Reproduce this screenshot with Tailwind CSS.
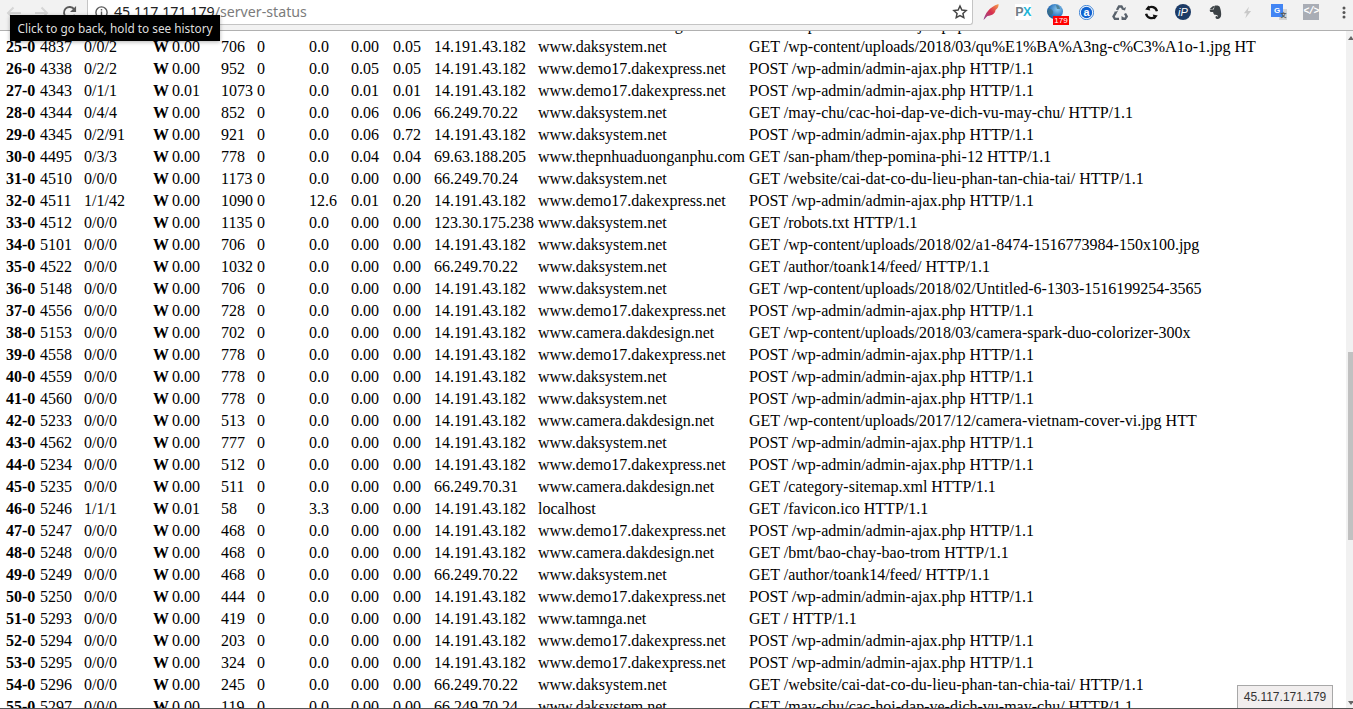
<!DOCTYPE html>
<html lang="en">
<head>
<meta charset="utf-8">
<title>server-status</title>
<script src="https://cdn.jsdelivr.net/npm/@tailwindcss/browser@4"></script>
</head>
<body class="h-[709px] w-[1353px] overflow-hidden bg-white relative flex flex-col">
<header class="h-[31px] shrink-0 bg-[#f2f2f2] border-b border-[#b0b0b0] flex items-start relative">
  <div class="w-[87px] h-[25px] shrink-0 flex items-center pl-[6px]">
    <svg width="16" height="14" viewBox="0 0 16 14" fill="none" stroke="#d6d6d6" stroke-width="2"><path d="M15 7H2M7.500 1.500 2 7l5.500 5.500"/></svg>
    <svg class="ml-[13px]" width="14" height="14" viewBox="0 0 14 14" fill="none" stroke="#d6d6d6" stroke-width="2"><path d="M0 7h12M6.500 1.500 12 7l-5.500 5.500"/></svg>
    <svg class="ml-[13px]" width="15" height="15" viewBox="0 0 16 16" fill="none" stroke="#5a5a5a" stroke-width="2"><path d="M13.600 10.500A6 6 0 1 1 13 4.600"/><path d="M15 1v6.500H8.500z" fill="#5a5a5a" stroke="none"/></svg>
  </div>
  <div class="w-[886px] h-[25px] shrink-0 bg-white border-l border-r border-b border-[#c4c4c4] rounded-br-[3px] flex items-center pl-[7px] pr-[4px] font-['Noto_Sans',sans-serif] text-[14.2px] leading-[20px]">
    <svg class="shrink-0 mr-[6px]" width="13" height="13" viewBox="0 0 13 13" fill="none" stroke="#5a5a5a" stroke-width="1.400"><circle cx="6.500" cy="6.500" r="5.600"/><path d="M6.500 5.500v4.200M6.500 3v1.500"/></svg>
    <span class="text-[#222]">45.117.171.179</span><span class="text-[#7b7b7b]">/server-status</span>
    <svg class="ml-auto" width="16" height="16" viewBox="0 0 24 24" fill="none" stroke="#444" stroke-width="2.200"><path d="m12 3 2.800 6 6.400.7-4.800 4.400 1.300 6.400L12 17.300l-5.700 3.200 1.300-6.400-4.800-4.400 6.400-.7z"/></svg>
  </div>
  <div class="flex-1 h-[24px] relative">
    <svg class="absolute left-[10px] top-[4px]" width="16" height="16" viewBox="0 0 16 16"><defs><linearGradient id="f" x1="0" y1="1" x2="1" y2="0"><stop offset="0" stop-color="#8a4a9a"/><stop offset=".5" stop-color="#d8304f"/><stop offset="1" stop-color="#f6a04a"/></linearGradient></defs><path d="M0.500 16C2 10 6 3 15.500 0c.5 3-1.500 5-3 6 0 3-3 5.500-8 6-1.500 1.500-3 3-4 4z" fill="url(#f)"/></svg>
    <div class="absolute left-[42px] top-[4px] w-[16px] h-[16px] bg-white flex items-center justify-center font-['Liberation_Sans',sans-serif] font-bold text-[12.5px] tracking-[-0.5px] leading-[16px]"><span class="text-[#6f7c85]">P</span><span class="text-[#1fb6d8]">X</span></div>
    <svg class="absolute left-[74px] top-[4px]" width="16" height="15" viewBox="0 0 16 15"><defs><radialGradient id="g" cx=".65" cy=".35" r=".8"><stop offset="0" stop-color="#8ccaf0"/><stop offset=".6" stop-color="#2f78c0"/><stop offset="1" stop-color="#204f80"/></radialGradient></defs><ellipse cx="8" cy="7.500" rx="8" ry="7.500" fill="url(#g)"/><path d="M1 6c2-2 4-1 5 1s-1 4-3 4-3-3-2-5zM9 1c2 0 4 2 4 4l-3 0z" fill="#3f6f7e" opacity=".7"/></svg>
    <div class="absolute left-[80px] top-[16px] w-[16px] h-[9px] bg-[#f00] text-white flex items-center justify-center font-['Liberation_Sans',sans-serif] text-[8px] leading-[9px]">179</div>
    <svg class="absolute left-[106px] top-[5px]" width="15" height="15" viewBox="0 0 18 18"><circle cx="9" cy="9" r="8.500" fill="#fff" stroke="#1d6fd0"/><circle cx="9" cy="9" r="6.800" fill="#0f62d0"/><text x="9" y="13" text-anchor="middle" fill="#fff" font-size="13" font-weight="700" font-family="Liberation Sans">a</text></svg>
    <svg class="absolute left-[139px] top-[4px]" width="16" height="16" viewBox="0 0 16 16" fill="none" stroke="#59626c" stroke-width="2.400"><path d="M5 6 7 2.500h2.500L11 5"/><path d="M3.500 9 1.500 12.500 3 15h4"/><path d="M10 15h3l1.700-2.500L13 9.500"/><path d="M9.500 5.500 13 6.500 14 3zM6 7 2.200 7.800 3.500 11zM9.500 12v4l3-2z" fill="#59626c" stroke="none"/></svg>
    <svg class="absolute left-[171px] top-[5px]" width="15" height="15" viewBox="0 0 18 18" fill="none" stroke="#111" stroke-width="2.800"><path d="M15.500 7.500A6.800 6.800 0 0 0 4.500 3.800M2.500 10.500A6.800 6.800 0 0 0 13.500 14.200"/><path d="M5.500 .5 1.500 5.500l6 1zM12.500 17.500l4-5-6-1z" fill="#111" stroke="none"/></svg>
    <div class="absolute left-[202px] top-[4px] w-[16px] h-[16px] rounded-full bg-[#1d3b66] flex items-center justify-center text-white italic font-['Liberation_Sans',sans-serif] text-[11px] leading-[16px]">iP</div>
    <svg class="absolute left-[236px] top-[4px]" width="13" height="16" viewBox="0 0 16 18" fill="#3c4246"><path d="M1 5 5 1.500h1L6 4 4 5.500zM6.500 1.500C9 .5 13 1 13.500 3.500c1 2.500 1.500 6 1.500 8.500 0 3.500-2 5.500-4.500 5.500S7.500 16 8.500 14c1 0 2 .5 2.500 1 0-1.500-1-2.500-3-2.500-2 0-2.500-1.500-3-3.500H2C.5 8 1 6.500 1 6h4c1 0 1.500-1 1.500-4.500z"/></svg>
    <svg class="absolute left-[270px] top-[6px]" width="9" height="13" viewBox="0 0 12 18" fill="#c9c9c9"><path d="M8 1 1 10h4l-2 7 8-10H6.500z"/></svg>
    <div class="absolute left-[306px] top-[9px] w-[8px] h-[11px] bg-[#d4d4d4]"></div>
    <div class="absolute left-[298px] top-[4px] w-[12px] h-[13px] bg-[#4285f4] flex items-center justify-center text-white font-bold font-['Liberation_Sans',sans-serif] text-[8px] leading-[13px]">G</div>
    <div class="absolute left-[307px] top-[10px] w-[7px] h-[9px] flex items-center justify-center text-[#555] font-bold font-['Noto_Sans_CJK_SC',sans-serif] text-[6px] leading-[9px]">文</div>
    <div class="absolute left-[330px] top-[4px] w-[16px] h-[16px] bg-[#a9adb5] flex items-center justify-center text-white font-bold font-['Liberation_Mono',monospace] text-[10px] leading-[16px] tracking-[-1px]">&lt;/&gt;</div>
    <svg class="absolute left-[369px] top-[6px]" width="4" height="13" viewBox="0 0 4 13" fill="#555"><circle cx="2" cy="2" r="1.500"/><circle cx="2" cy="6.500" r="1.500"/><circle cx="2" cy="11" r="1.500"/></svg>
  </div>
</header>
<main class="h-[678px] shrink-0 flex overflow-hidden border-b border-[#555]">
  <div class="flex-1 overflow-hidden">
    <table class="table-fixed w-[1267px] ml-[3px] mt-[-18px] border-separate border-spacing-[2px] font-['Liberation_Serif',serif] text-[16px] leading-[18px] text-black [&_td]:p-px [&_td]:whitespace-nowrap">
      <colgroup><col class="w-[32px]"><col class="w-[42px]"><col class="w-[67px]"><col class="w-[17px]"><col class="w-[47px]"><col class="w-[34px]"><col class="w-[50px]"><col class="w-[40px]"><col class="w-[40px]"><col class="w-[39px]"><col class="w-[102px]"><col class="w-[209px]"><col></colgroup>
      <tbody>
<tr><td><b>24-0</b></td><td>4336</td><td>0/1/1</td><td><b>W</b></td><td>0.00</td><td>706</td><td>0</td><td>0.0</td><td>0.00</td><td>0.00</td><td>14.191.43.182</td><td>www.camera.dakdesign.net</td><td>POST /wp-admin/admin-ajax.php HTTP/1.1</td></tr>
<tr><td><b>25-0</b></td><td>4837</td><td>0/0/2</td><td><b>W</b></td><td>0.00</td><td>706</td><td>0</td><td>0.0</td><td>0.00</td><td>0.05</td><td>14.191.43.182</td><td>www.daksystem.net</td><td>GET /wp-content/uploads/2018/03/qu%E1%BA%A3ng-c%C3%A1o-1.jpg HT</td></tr>
<tr><td><b>26-0</b></td><td>4338</td><td>0/2/2</td><td><b>W</b></td><td>0.00</td><td>952</td><td>0</td><td>0.0</td><td>0.05</td><td>0.05</td><td>14.191.43.182</td><td>www.demo17.dakexpress.net</td><td>POST /wp-admin/admin-ajax.php HTTP/1.1</td></tr>
<tr><td><b>27-0</b></td><td>4343</td><td>0/1/1</td><td><b>W</b></td><td>0.01</td><td>1073</td><td>0</td><td>0.0</td><td>0.01</td><td>0.01</td><td>14.191.43.182</td><td>www.demo17.dakexpress.net</td><td>POST /wp-admin/admin-ajax.php HTTP/1.1</td></tr>
<tr><td><b>28-0</b></td><td>4344</td><td>0/4/4</td><td><b>W</b></td><td>0.00</td><td>852</td><td>0</td><td>0.0</td><td>0.06</td><td>0.06</td><td>66.249.70.22</td><td>www.daksystem.net</td><td>GET /may-chu/cac-hoi-dap-ve-dich-vu-may-chu/ HTTP/1.1</td></tr>
<tr><td><b>29-0</b></td><td>4345</td><td>0/2/91</td><td><b>W</b></td><td>0.00</td><td>921</td><td>0</td><td>0.0</td><td>0.06</td><td>0.72</td><td>14.191.43.182</td><td>www.daksystem.net</td><td>POST /wp-admin/admin-ajax.php HTTP/1.1</td></tr>
<tr><td><b>30-0</b></td><td>4495</td><td>0/3/3</td><td><b>W</b></td><td>0.00</td><td>778</td><td>0</td><td>0.0</td><td>0.04</td><td>0.04</td><td>69.63.188.205</td><td>www.thepnhuaduonganphu.com</td><td>GET /san-pham/thep-pomina-phi-12 HTTP/1.1</td></tr>
<tr><td><b>31-0</b></td><td>4510</td><td>0/0/0</td><td><b>W</b></td><td>0.00</td><td>1173</td><td>0</td><td>0.0</td><td>0.00</td><td>0.00</td><td>66.249.70.24</td><td>www.daksystem.net</td><td>GET /website/cai-dat-co-du-lieu-phan-tan-chia-tai/ HTTP/1.1</td></tr>
<tr><td><b>32-0</b></td><td>4511</td><td>1/1/42</td><td><b>W</b></td><td>0.00</td><td>1090</td><td>0</td><td>12.6</td><td>0.01</td><td>0.20</td><td>14.191.43.182</td><td>www.demo17.dakexpress.net</td><td>POST /wp-admin/admin-ajax.php HTTP/1.1</td></tr>
<tr><td><b>33-0</b></td><td>4512</td><td>0/0/0</td><td><b>W</b></td><td>0.00</td><td>1135</td><td>0</td><td>0.0</td><td>0.00</td><td>0.00</td><td>123.30.175.238</td><td>www.daksystem.net</td><td>GET /robots.txt HTTP/1.1</td></tr>
<tr><td><b>34-0</b></td><td>5101</td><td>0/0/0</td><td><b>W</b></td><td>0.00</td><td>706</td><td>0</td><td>0.0</td><td>0.00</td><td>0.00</td><td>14.191.43.182</td><td>www.daksystem.net</td><td>GET /wp-content/uploads/2018/02/a1-8474-1516773984-150x100.jpg</td></tr>
<tr><td><b>35-0</b></td><td>4522</td><td>0/0/0</td><td><b>W</b></td><td>0.00</td><td>1032</td><td>0</td><td>0.0</td><td>0.00</td><td>0.00</td><td>66.249.70.22</td><td>www.daksystem.net</td><td>GET /author/toank14/feed/ HTTP/1.1</td></tr>
<tr><td><b>36-0</b></td><td>5148</td><td>0/0/0</td><td><b>W</b></td><td>0.00</td><td>706</td><td>0</td><td>0.0</td><td>0.00</td><td>0.00</td><td>14.191.43.182</td><td>www.daksystem.net</td><td>GET /wp-content/uploads/2018/02/Untitled-6-1303-1516199254-3565</td></tr>
<tr><td><b>37-0</b></td><td>4556</td><td>0/0/0</td><td><b>W</b></td><td>0.00</td><td>728</td><td>0</td><td>0.0</td><td>0.00</td><td>0.00</td><td>14.191.43.182</td><td>www.demo17.dakexpress.net</td><td>POST /wp-admin/admin-ajax.php HTTP/1.1</td></tr>
<tr><td><b>38-0</b></td><td>5153</td><td>0/0/0</td><td><b>W</b></td><td>0.00</td><td>702</td><td>0</td><td>0.0</td><td>0.00</td><td>0.00</td><td>14.191.43.182</td><td>www.camera.dakdesign.net</td><td>GET /wp-content/uploads/2018/03/camera-spark-duo-colorizer-300x</td></tr>
<tr><td><b>39-0</b></td><td>4558</td><td>0/0/0</td><td><b>W</b></td><td>0.00</td><td>778</td><td>0</td><td>0.0</td><td>0.00</td><td>0.00</td><td>14.191.43.182</td><td>www.demo17.dakexpress.net</td><td>POST /wp-admin/admin-ajax.php HTTP/1.1</td></tr>
<tr><td><b>40-0</b></td><td>4559</td><td>0/0/0</td><td><b>W</b></td><td>0.00</td><td>778</td><td>0</td><td>0.0</td><td>0.00</td><td>0.00</td><td>14.191.43.182</td><td>www.daksystem.net</td><td>POST /wp-admin/admin-ajax.php HTTP/1.1</td></tr>
<tr><td><b>41-0</b></td><td>4560</td><td>0/0/0</td><td><b>W</b></td><td>0.00</td><td>778</td><td>0</td><td>0.0</td><td>0.00</td><td>0.00</td><td>14.191.43.182</td><td>www.daksystem.net</td><td>POST /wp-admin/admin-ajax.php HTTP/1.1</td></tr>
<tr><td><b>42-0</b></td><td>5233</td><td>0/0/0</td><td><b>W</b></td><td>0.00</td><td>513</td><td>0</td><td>0.0</td><td>0.00</td><td>0.00</td><td>14.191.43.182</td><td>www.camera.dakdesign.net</td><td>GET /wp-content/uploads/2017/12/camera-vietnam-cover-vi.jpg HTT</td></tr>
<tr><td><b>43-0</b></td><td>4562</td><td>0/0/0</td><td><b>W</b></td><td>0.00</td><td>777</td><td>0</td><td>0.0</td><td>0.00</td><td>0.00</td><td>14.191.43.182</td><td>www.daksystem.net</td><td>POST /wp-admin/admin-ajax.php HTTP/1.1</td></tr>
<tr><td><b>44-0</b></td><td>5234</td><td>0/0/0</td><td><b>W</b></td><td>0.00</td><td>512</td><td>0</td><td>0.0</td><td>0.00</td><td>0.00</td><td>14.191.43.182</td><td>www.demo17.dakexpress.net</td><td>POST /wp-admin/admin-ajax.php HTTP/1.1</td></tr>
<tr><td><b>45-0</b></td><td>5235</td><td>0/0/0</td><td><b>W</b></td><td>0.00</td><td>511</td><td>0</td><td>0.0</td><td>0.00</td><td>0.00</td><td>66.249.70.31</td><td>www.camera.dakdesign.net</td><td>GET /category-sitemap.xml HTTP/1.1</td></tr>
<tr><td><b>46-0</b></td><td>5246</td><td>1/1/1</td><td><b>W</b></td><td>0.01</td><td>58</td><td>0</td><td>3.3</td><td>0.00</td><td>0.00</td><td>14.191.43.182</td><td>localhost</td><td>GET /favicon.ico HTTP/1.1</td></tr>
<tr><td><b>47-0</b></td><td>5247</td><td>0/0/0</td><td><b>W</b></td><td>0.00</td><td>468</td><td>0</td><td>0.0</td><td>0.00</td><td>0.00</td><td>14.191.43.182</td><td>www.demo17.dakexpress.net</td><td>POST /wp-admin/admin-ajax.php HTTP/1.1</td></tr>
<tr><td><b>48-0</b></td><td>5248</td><td>0/0/0</td><td><b>W</b></td><td>0.00</td><td>468</td><td>0</td><td>0.0</td><td>0.00</td><td>0.00</td><td>14.191.43.182</td><td>www.camera.dakdesign.net</td><td>GET /bmt/bao-chay-bao-trom HTTP/1.1</td></tr>
<tr><td><b>49-0</b></td><td>5249</td><td>0/0/0</td><td><b>W</b></td><td>0.00</td><td>468</td><td>0</td><td>0.0</td><td>0.00</td><td>0.00</td><td>66.249.70.22</td><td>www.daksystem.net</td><td>GET /author/toank14/feed/ HTTP/1.1</td></tr>
<tr><td><b>50-0</b></td><td>5250</td><td>0/0/0</td><td><b>W</b></td><td>0.00</td><td>444</td><td>0</td><td>0.0</td><td>0.00</td><td>0.00</td><td>14.191.43.182</td><td>www.demo17.dakexpress.net</td><td>POST /wp-admin/admin-ajax.php HTTP/1.1</td></tr>
<tr><td><b>51-0</b></td><td>5293</td><td>0/0/0</td><td><b>W</b></td><td>0.00</td><td>419</td><td>0</td><td>0.0</td><td>0.00</td><td>0.00</td><td>14.191.43.182</td><td>www.tamnga.net</td><td>GET / HTTP/1.1</td></tr>
<tr><td><b>52-0</b></td><td>5294</td><td>0/0/0</td><td><b>W</b></td><td>0.00</td><td>203</td><td>0</td><td>0.0</td><td>0.00</td><td>0.00</td><td>14.191.43.182</td><td>www.demo17.dakexpress.net</td><td>POST /wp-admin/admin-ajax.php HTTP/1.1</td></tr>
<tr><td><b>53-0</b></td><td>5295</td><td>0/0/0</td><td><b>W</b></td><td>0.00</td><td>324</td><td>0</td><td>0.0</td><td>0.00</td><td>0.00</td><td>14.191.43.182</td><td>www.demo17.dakexpress.net</td><td>POST /wp-admin/admin-ajax.php HTTP/1.1</td></tr>
<tr><td><b>54-0</b></td><td>5296</td><td>0/0/0</td><td><b>W</b></td><td>0.00</td><td>245</td><td>0</td><td>0.0</td><td>0.00</td><td>0.00</td><td>66.249.70.22</td><td>www.daksystem.net</td><td>GET /website/cai-dat-co-du-lieu-phan-tan-chia-tai/ HTTP/1.1</td></tr>
<tr><td><b>55-0</b></td><td>5297</td><td>0/0/0</td><td><b>W</b></td><td>0.00</td><td>119</td><td>0</td><td>0.0</td><td>0.00</td><td>0.00</td><td>66.249.70.24</td><td>www.daksystem.net</td><td>GET /may-chu/cac-hoi-dap-ve-dich-vu-may-chu/ HTTP/1.1</td></tr>
      </tbody>
    </table>
  </div>
  <aside class="w-[7px] shrink-0 bg-[#f1f1f1] pt-[321px] pl-[2px] relative">
    <div class="w-[5px] h-[188px] bg-[#c1c1c1]"></div>
    <div class="absolute left-[2px] top-[5px] w-0 h-0 border-l-[3px] border-r-[3px] border-b-[4px] border-l-transparent border-r-transparent border-b-[#666]"></div>
    <div class="absolute left-[2px] bottom-[3px] w-0 h-0 border-l-[3px] border-r-[3px] border-t-[4px] border-l-transparent border-r-transparent border-t-[#666]"></div>
  </aside>
</main>
<div class="absolute left-[10px] top-[15px] w-[210px] h-[26px] bg-black text-[#dedede] shadow-[0_1px_4px_rgba(0,0,0,0.3)] flex items-center justify-center font-['Noto_Sans',sans-serif] text-[11.8px] leading-[16px] whitespace-nowrap">Click to go back, hold to see history</div>
<div class="absolute left-[1237px] top-[685px] w-[96px] h-[23px] bg-[#f1eeee] border-l border-t border-r border-[#a8a8a8] flex items-center justify-center font-['Liberation_Sans',sans-serif] text-[12px] leading-[16px] text-[#333] whitespace-nowrap">45.117.171.179</div>
</body>
</html>
